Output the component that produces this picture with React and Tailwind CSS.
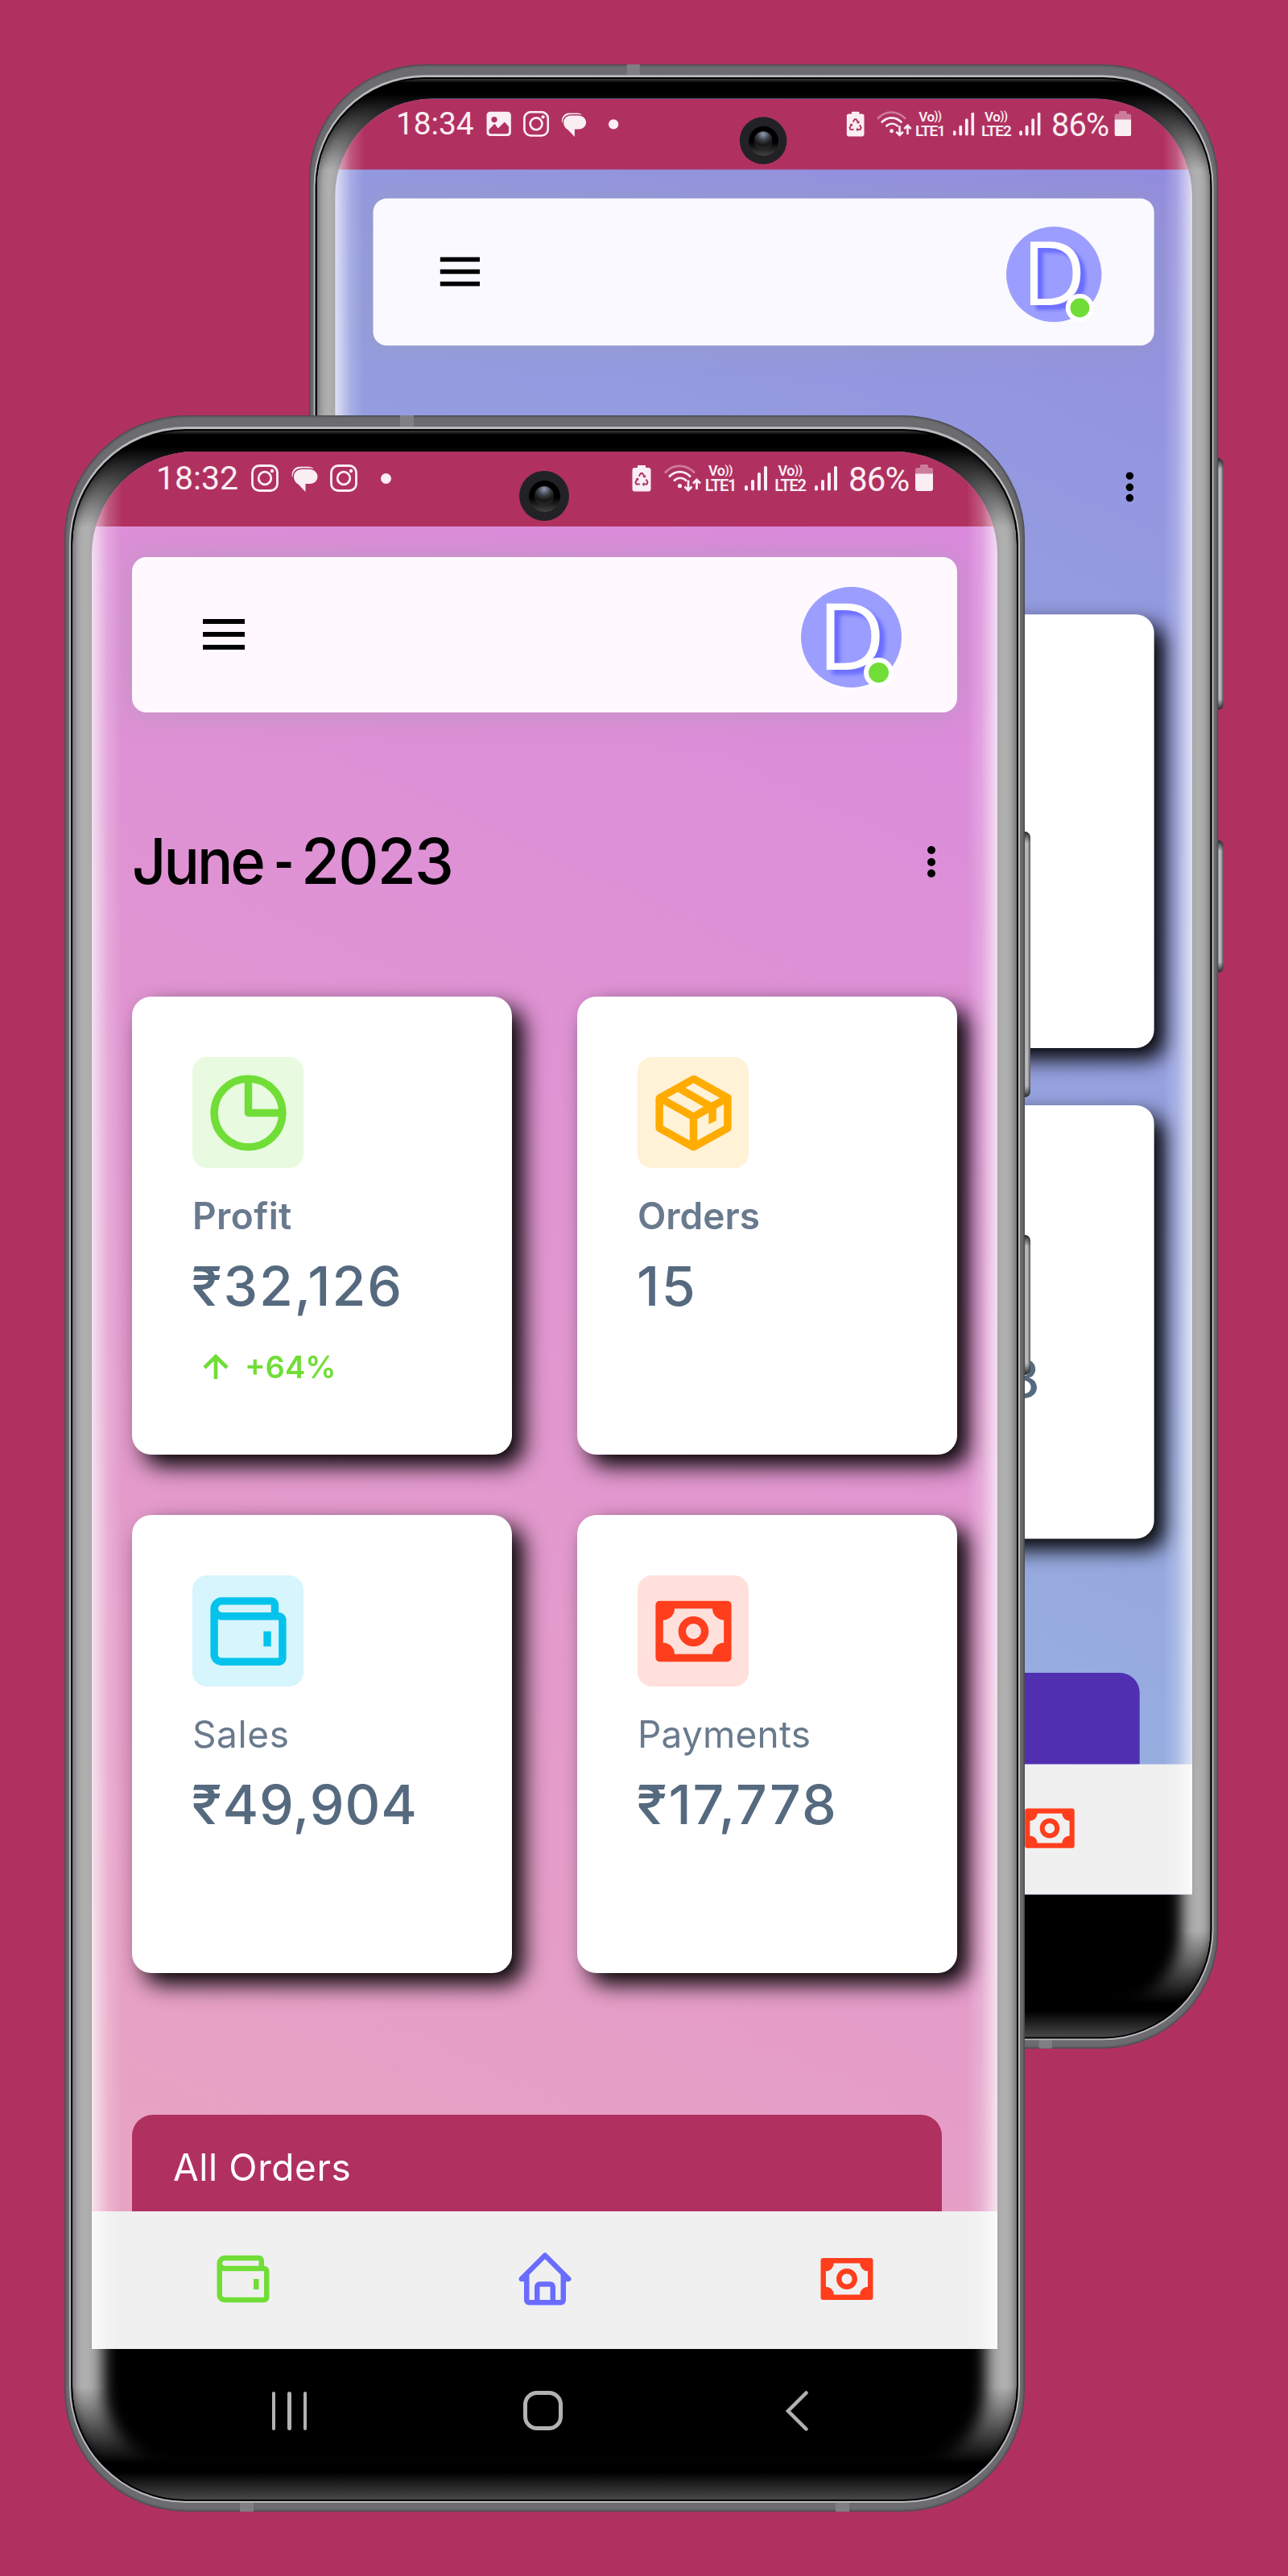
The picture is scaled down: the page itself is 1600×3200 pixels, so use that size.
import React from "react";
import { BiPackage, BiWallet, BiMoney, BiHome, BiUpArrowAlt } from "react-icons/bi";

function PieIcon() {
  return (
    <svg viewBox="0 0 24 24" className="size-[113px] text-[#71dd37]" fill="none" stroke="currentColor" strokeWidth="2" strokeLinejoin="round">
      <circle cx="12" cy="12" r="9" />
      <path d="M12 3v9h9" />
    </svg>
  );
}

function InstagramIcon() {
  return (
    <svg viewBox="0 0 34 34" className="size-[34px]" fill="none" stroke="currentColor" strokeWidth="2.8">
      <rect x="1.5" y="1.5" width="31" height="31" rx="8.5" />
      <circle cx="17" cy="17" r="7.8" />
      <circle cx="26" cy="8" r="2.2" fill="currentColor" stroke="none" />
    </svg>
  );
}

function BubbleIcon() {
  return (
    <svg viewBox="0 0 34 34" className="size-[34px]" fill="currentColor">
      <path d="M13.5 6h10C29 6 33.500 10 33.500 15s-4 9-9.500 9h-5.500V34l-9-9.500C5.500 22.500 4 18.500 4 14.800 4 10 8.300 6 13.500 6z" />
      <path d="M2 16C.2 9 5 2.800 11 2.800h11c3 0 5.200 1 6.800 2.600-1.600-.7-3.300-1-5.300-1h-10C7.500 4.400 2.600 9 2.600 14.500z" />
    </svg>
  );
}

function PictureIcon() {
  return (
    <svg viewBox="0 0 34 34" className="size-[34px]">
      <rect x="1" y="1" width="32" height="32" rx="4.500" fill="currentColor" />
      <circle cx="11" cy="11.500" r="3.800" fill="#b03160" />
      <path d="M4 27v-2.500l7.500-7.500 4.500 6 8.500-8.500 5.500 6V27q0 3-3 3H7q-3 0-3-3z" fill="#b03160" />
    </svg>
  );
}

function RecycleBatteryIcon() {
  return (
    <svg viewBox="0 0 24 34" className="h-[34px] w-[24px]">
      <path d="M7 1h10v3h3.500q3 0 3 3v23.500q0 3-3 3h-17q-3 0-3-3V7q0-3 3-3H7z" fill="currentColor" />
      <path d="M8.800 14.500 11 11h2l2.400 3.800M17.500 18.500l2 3.600-1 2.400h-4M9.800 24.500H5.500l-1-2.400 2.200-4" fill="none" stroke="#b03160" strokeWidth="2" />
      <path d="m13.200 15.800 3.600.8.600-3.600zM15.200 21.800l-2.600 2.700 2.600 2.700zM4.300 17.800l3.400-1.200 1 3.500z" fill="#b03160" />
    </svg>
  );
}

function WifiIcon() {
  return (
    <svg viewBox="0 0 46 34" className="h-[34px] w-[46px]" fill="none" stroke="currentColor" strokeWidth="2.700">
      <path d="M1 10.500C11-1 27-1 38 10.500" opacity=".4" />
      <path d="M6 15.500c8-8.500 19-8.500 27 0" />
      <path d="M12 20.500c5-4.800 11-4.800 16 0" />
      <circle cx="19.500" cy="26.500" r="2.600" fill="currentColor" stroke="none" />
      <path d="M30 19.500v12M25.500 27.500l4.500 4.500 4.500-4.500M40.500 31V19M36 23.500l4.500-4.500 4.500 4.500" />
    </svg>
  );
}

function SignalIcon() {
  return (
    <svg viewBox="0 0 28 34" className="h-[34px] w-[28px]" fill="currentColor">
      <rect x="0" y="26" width="4" height="6.500" rx="1.800" />
      <rect x="8" y="19" width="4" height="13.500" rx="1.800" />
      <rect x="16" y="10" width="4" height="22.500" rx="1.800" />
      <rect x="24" y="2" width="4" height="30.500" rx="1.800" />
    </svg>
  );
}

function BatteryIcon() {
  return (
    <svg viewBox="0 0 22 34" className="h-[34px] w-[22px]" fill="currentColor">
      <path d="M6 1.500q0-1.500 1.500-1.500h7q1.500 0 1.500 1.500V4h3q3 0 3 3v5H0V7q0-3 3-3h3z" opacity=".4" />
      <path d="M0 11.500h22V30q0 3-3 3H3q-3 0-3-3z" />
    </svg>
  );
}

function Lte({ n }) {
  return (
    <div className="flex h-[34px] flex-col items-center font-semibold">
      <div className="flex h-[15px] items-center whitespace-nowrap text-[18px] leading-none tracking-[-0.5px]">
        Vo<span className="text-[15px] tracking-[-0.5px]">))</span>
      </div>
      <div className="flex h-[19px] items-center pt-[2px] text-[20px] leading-none tracking-[-1.2px]">LTE{n}</div>
    </div>
  );
}

function StatusBar({ time, icons }) {
  return (
    <div className="relative flex h-[93px] shrink-0 bg-[#b03160] pl-[80px] pt-[16px] font-[Roboto,sans-serif] text-[#faeef3]">
      <div className="flex h-[35px] w-[118px] items-center text-[41px] leading-none">{time}</div>
      {icons.map((Icon, i) => (
        <div key={i} className="w-[49px]"><Icon /></div>
      ))}
      <div className="ml-[14px] mt-[10.500px] size-[13px] rounded-full bg-[#faeef3]" />
      <div className="ml-auto flex h-[35px] pr-[80px]">
        <div className="w-[40px]"><RecycleBatteryIcon /></div>
        <div className="w-[51px]"><WifiIcon /></div>
        <div className="flex w-[39px] justify-center"><Lte n="1" /></div>
        <div className="ml-[10px] w-[36.500px]"><SignalIcon /></div>
        <div className="flex w-[41px] justify-center"><Lte n="2" /></div>
        <div className="ml-[10px] w-[42px]"><SignalIcon /></div>
        <div className="flex h-[37px] w-[83px] items-center text-[42px] leading-none tracking-[-0.8px]">86%</div>
        <BatteryIcon />
      </div>
      <div className="absolute left-[531px] top-[24px] flex size-[62px] items-center justify-center rounded-full bg-[#222224]">
        <div className="flex size-[39px] items-center justify-center rounded-full bg-[linear-gradient(#000_55%,#444)]">
          <div className="size-[24px] rounded-full bg-[radial-gradient(circle_at_50%_15%,#8f9bb5_0%,#3a3c42_35%,#161616_60%,#333_100%)]" />
        </div>
      </div>
    </div>
  );
}

function Avatar() {
  return (
    <div className="relative mt-[6px] flex size-[125px] items-center justify-center rounded-full bg-[#9c9eff] pb-[10px]">
      <span className="font-['Open_Sans',sans-serif] text-[116px] font-normal leading-none text-white [text-shadow:7px_6px_5px_#696cff]">D</span>
      <span className="absolute left-[78px] top-[88px] size-[37px] rounded-full border-[6px] border-white bg-[#71dd37]" />
    </div>
  );
}

function Kebab() {
  return (
    <div className="flex flex-col gap-[4.500px] pt-[1px]">
      <i className="size-[10px] rounded-full bg-black" />
      <i className="size-[10px] rounded-full bg-black" />
      <i className="size-[10px] rounded-full bg-black" />
    </div>
  );
}

const PAYMENTS = { label: "Payments", amount: "₹17,778", tile: "bg-[#ffe0db] text-[#ff3e1d]", labelClass: "font-normal tracking-[0.2px]", amountClass: "tracking-[1.9px]", Icon: BiMoney };

const FRONT_CARDS = [
  { label: "Profit", amount: "₹32,126", tile: "bg-[#e8fadf]", labelClass: "font-semibold tracking-[0.4px]", amountClass: "tracking-[1.9px]", Icon: PieIcon, change: "+64%" },
  { label: "Orders", amount: "15", tile: "bg-[#fff2d6] text-[#ffab00]", labelClass: "font-semibold", amountClass: "tracking-[2.5px]", Icon: BiPackage },
  { label: "Sales", amount: "₹49,904", tile: "bg-[#d7f5fc] text-[#03c3ec]", labelClass: "font-normal tracking-[0.6px]", amountClass: "tracking-[0.9px]", Icon: BiWallet },
  PAYMENTS,
];

// The rear phone only exposes its right edge, so just one card carries content.
const REAR_CARDS = [{}, {}, {}, PAYMENTS];

function StatCard({ label, amount, tile, labelClass, amountClass, Icon, change }) {
  return (
    <div className="h-[569px] rounded-[24px] bg-white p-[75px] shadow-[14px_14px_28px_#000]">
      {label && (
        <>
          <div className={"flex size-[138px] items-center justify-center rounded-[18px] " + tile}>
            <Icon className="size-[113px]" />
          </div>
          <div className={"mt-[29px] flex h-[60px] items-center text-[46px] text-[#697a8d] " + labelClass}>{label}</div>
          <div className={"-ml-[1px] mt-[17px] flex h-[80px] items-center whitespace-nowrap text-[68px] font-medium text-[#566a7f] " + amountClass}>{amount}</div>
        </>
      )}
      {change && (
        <div className="mt-[34px] flex h-[55px] items-center text-[38px] font-semibold text-[#71dd37]">
          <BiUpArrowAlt className="ml-[1px] mr-[8px] size-[56px] shrink-0" />
          {change}
        </div>
      )}
    </div>
  );
}

function Phone({ time, icons, position, screen, header, banner, title, cards, bannerText }) {
  return (
    <div className={"absolute h-[2604px] w-[1193px] origin-top-left " + position}>
      <div className="absolute left-[1191px] top-[517px] h-[330px] w-[9px] rounded-r-[7px] bg-[linear-gradient(#222,transparent_14px,transparent_316px,#222),linear-gradient(90deg,#999,#c0c2c5_55%,#555)]" />
      <div className="absolute left-[1191px] top-[1018px] h-[174px] w-[9px] rounded-r-[7px] bg-[linear-gradient(#222,transparent_14px,transparent_160px,#222),linear-gradient(90deg,#999,#c0c2c5_55%,#555)]" />
      <div className="relative h-full rounded-[152px] bg-[#6c6b70] px-[6px] pb-[11px] pt-[14px] shadow-[inset_0_0_3px_1px_#3c3d3f]">
        <i className="absolute left-[417px] top-0 h-[15px] w-[17px] bg-[#807f84]" />
        <i className="absolute bottom-0 left-[218px] h-[12px] w-[17px] bg-[#807f84]" />
        <i className="absolute bottom-0 left-[958px] h-[12px] w-[17px] bg-[#807f84]" />
        <div className="relative h-full rounded-[145px] bg-[#b9babb] px-[2px] pb-[2px] pt-[3px]">
          <div className="h-full rounded-[143px] bg-black p-[2px]">
            <div className="relative h-full overflow-hidden rounded-[141px] bg-[linear-gradient(#3c3c3c,#000_5px,#000_2536px,#484848)] px-[24px] pt-[26px]">
              <div className="absolute inset-0 rounded-[141px] shadow-[inset_0_0_12px_1px_#505050,inset_0_0_18px_38px_#b0b0b0] [mask-image:linear-gradient(transparent_20px,#000_120px,#000_2430px,transparent_2525px)]" />
              <div className={"relative flex h-[2357px] flex-col overflow-hidden rounded-t-[128px] font-[Inter,sans-serif] " + screen}>
                <StatusBar time={time} icons={icons} />
                <div className="h-[2093px] shrink-0 overflow-hidden pl-[50px] pr-[50px] pt-[38px]">
                  <div className={"flex h-[193px] items-center justify-between rounded-[18px] pl-[88px] pr-[69px] shadow-[0_0_40px_rgba(150,160,170,0.45)] " + header}>
                    <div className="flex flex-col gap-[10px] pb-[1px]">
                      <i className="h-[6px] w-[52px] bg-black" />
                      <i className="h-[6px] w-[52px] bg-black" />
                      <i className="h-[6px] w-[52px] bg-black" />
                    </div>
                    <Avatar />
                  </div>
                  <div className="mt-[135px] flex h-[100px] items-center justify-between pr-[27px] text-black">
                    <h1 className="flex items-center whitespace-nowrap text-[78px] font-medium leading-none">
                      {title && (
                        <>
                          <span className="w-[176px] origin-left scale-x-[0.945] tracking-[-3px]">{title[0]}</span>
                          <span className="w-[34px] origin-left scale-x-[0.7]">-</span>
                          <span className="tracking-[-1.800px]">{title[1]}</span>
                        </>
                      )}
                    </h1>
                    <Kebab />
                  </div>
                  <div className="mt-[118px] grid grid-cols-2 gap-x-[81px] gap-y-[75px]">
                    {cards.map((c, i) => <StatCard key={i} {...c} />)}
                  </div>
                  <div className={"mr-[19px] mt-[176px] flex h-[130px] items-center rounded-t-[26px] pl-[51px] text-[46px] tracking-[0.600px] text-white " + banner}>
                    {bannerText}
                  </div>
                </div>
                <nav className="grid h-[171px] shrink-0 grid-cols-3 place-items-center bg-[#f0f0f0] pb-[3px]">
                  <BiWallet className="size-[78px] text-[#71dd37]" />
                  <BiHome className="size-[78px] text-[#696cff]" />
                  <BiMoney className="size-[78px] text-[#ff3e1d]" />
                </nav>
                <div className="pointer-events-none absolute inset-0 bg-[linear-gradient(90deg,rgba(255,255,255,0.700),rgba(255,255,255,0.200)_20px,transparent_38px,transparent_1087px,rgba(255,255,255,0.200)_1105px,rgba(255,255,255,0.700))]" />
              </div>
              <div className="relative grid h-[153px] grid-cols-3 place-items-center pl-[88px] pr-[92px]">
                <div className="flex gap-[15px]">
                  <i className="h-[48px] w-[4.500px] rounded-full bg-[#b2b2b2]" />
                  <i className="h-[48px] w-[4.500px] rounded-full bg-[#b2b2b2]" />
                  <i className="h-[48px] w-[4.500px] rounded-full bg-[#b2b2b2]" />
                </div>
                <div className="size-[49px] rounded-[17px] border-[5px] border-[#b2b2b2]" />
                <svg viewBox="0 0 28 50" className="h-[50px] w-[28px]" fill="none" stroke="#b2b2b2" strokeWidth="4.500" strokeLinecap="round">
                  <path d="M25.500 2.500 3 25l22.500 22.500" />
                </svg>
              </div>
            </div>
          </div>
        </div>
      </div>
    </div>
  );
}

export default function App() {
  return (
    <div className="relative h-[3200px] w-[1600px] overflow-hidden bg-[#b03160]">
      <Phone
        time="18:34"
        icons={[PictureIcon, InstagramIcon, BubbleIcon]}
        position="left-[384px] top-[80px] scale-[0.9465]"
        screen="bg-[linear-gradient(25deg,#97b0e0_15%,#96a2df_50%,#949be0_75%,#938adf)]"
        header="bg-[#faf9ff]"
        banner="bg-[#5030b0]"
        cards={REAR_CARDS}
      />
      <Phone
        time="18:32"
        icons={[InstagramIcon, BubbleIcon, InstagramIcon]}
        position="left-[80px] top-[516px]"
        screen="bg-[linear-gradient(25deg,#e8a3c2_8%,#df93d3_65%,#db8adc_95%)]"
        header="bg-[#fff9ff]"
        banner="bg-[#b03160]"
        title={["June", "2023"]}
        cards={FRONT_CARDS}
        bannerText="All Orders"
      />
    </div>
  );
}
